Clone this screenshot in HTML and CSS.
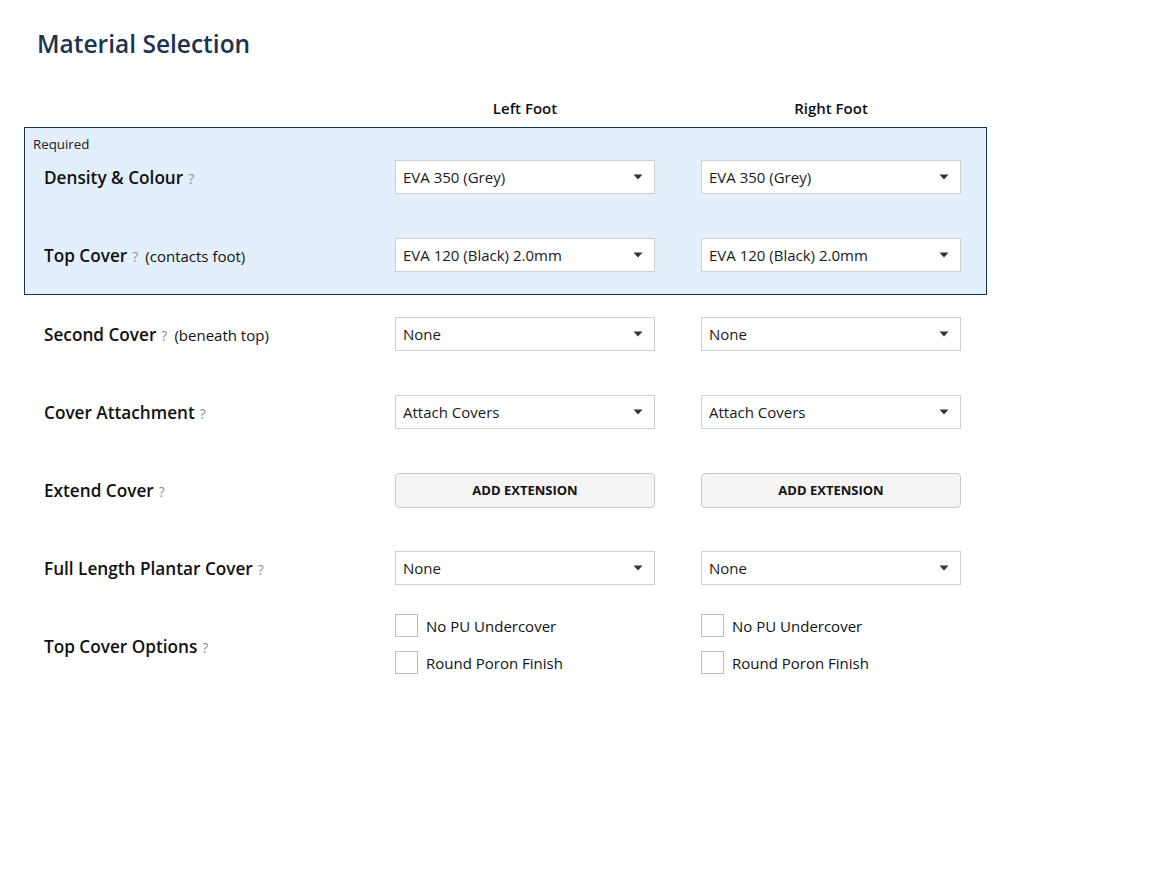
FILE: index.html
```html
<!DOCTYPE html>
<html>
<head>
<meta charset="utf-8">
<link rel="stylesheet" href="styles.css">
</head>
<body>
<div class="page">
  <h1 class="title">Material Selection</h1>
  <div class="form">
    <div class="grid head">
      <div></div>
      <div class="colhead">Left Foot</div>
      <div class="colhead">Right Foot</div>
    </div>
    <div class="required">
      <span class="req-tag">Required</span>
      <div class="grid row">
        <div class="label"><b>Density &amp; Colour</b><span class="q">?</span></div>
        <div class="select"><span>EVA 350 (Grey)</span><svg class="arrow" width="10" height="6" viewBox="0 0 10 6"><path d="M0.5 0.5h9L5 5.5z" fill="#333"/></svg></div>
        <div class="select"><span>EVA 350 (Grey)</span><svg class="arrow" width="10" height="6" viewBox="0 0 10 6"><path d="M0.5 0.5h9L5 5.5z" fill="#333"/></svg></div>
      </div>
      <div class="grid row">
        <div class="label"><b>Top Cover</b><span class="q">?</span><span class="note">(contacts foot)</span></div>
        <div class="select"><span>EVA 120 (Black) 2.0mm</span><svg class="arrow" width="10" height="6" viewBox="0 0 10 6"><path d="M0.5 0.5h9L5 5.5z" fill="#333"/></svg></div>
        <div class="select"><span>EVA 120 (Black) 2.0mm</span><svg class="arrow" width="10" height="6" viewBox="0 0 10 6"><path d="M0.5 0.5h9L5 5.5z" fill="#333"/></svg></div>
      </div>
    </div>
    <div class="rest">
      <div class="grid row">
        <div class="label"><b>Second Cover</b><span class="q">?</span><span class="note">(beneath top)</span></div>
        <div class="select"><span>None</span><svg class="arrow" width="10" height="6" viewBox="0 0 10 6"><path d="M0.5 0.5h9L5 5.5z" fill="#333"/></svg></div>
        <div class="select"><span>None</span><svg class="arrow" width="10" height="6" viewBox="0 0 10 6"><path d="M0.5 0.5h9L5 5.5z" fill="#333"/></svg></div>
      </div>
      <div class="grid row">
        <div class="label"><b>Cover Attachment</b><span class="q">?</span></div>
        <div class="select"><span>Attach Covers</span><svg class="arrow" width="10" height="6" viewBox="0 0 10 6"><path d="M0.5 0.5h9L5 5.5z" fill="#333"/></svg></div>
        <div class="select"><span>Attach Covers</span><svg class="arrow" width="10" height="6" viewBox="0 0 10 6"><path d="M0.5 0.5h9L5 5.5z" fill="#333"/></svg></div>
      </div>
      <div class="grid row">
        <div class="label"><b>Extend Cover</b><span class="q">?</span></div>
        <button class="btn">ADD EXTENSION</button>
        <button class="btn">ADD EXTENSION</button>
      </div>
      <div class="grid row">
        <div class="label"><b>Full Length Plantar Cover</b><span class="q">?</span></div>
        <div class="select"><span>None</span><svg class="arrow" width="10" height="6" viewBox="0 0 10 6"><path d="M0.5 0.5h9L5 5.5z" fill="#333"/></svg></div>
        <div class="select"><span>None</span><svg class="arrow" width="10" height="6" viewBox="0 0 10 6"><path d="M0.5 0.5h9L5 5.5z" fill="#333"/></svg></div>
      </div>
      <div class="grid row">
        <div class="label"><b>Top Cover Options</b><span class="q">?</span></div>
        <div class="checks">
          <label class="check"><span class="box"></span>No PU Undercover</label>
          <label class="check"><span class="box"></span>Round Poron Finish</label>
        </div>
        <div class="checks">
          <label class="check"><span class="box"></span>No PU Undercover</label>
          <label class="check"><span class="box"></span>Round Poron Finish</label>
        </div>
      </div>
    </div>
  </div>
</div>
</body>
</html>
```

FILE: styles.css
```css
* { box-sizing: border-box; }
html, body { margin: 0; padding: 0; background: #fff; }
body {
  font-family: "Open Sans", "Noto Sans", "Liberation Sans", sans-serif;
  color: #111;
}
.page {
  padding: 26px 0 0 24px;
}
.title {
  margin: 0 0 0 13px;
  font-size: 24.5px;
  line-height: 36px;
  font-weight: 600;
  color: #1c3350;
}
.form {
  width: 963px;
  margin-top: 36px;
}
.grid {
  display: grid;
  grid-template-columns: 305px 260px 260px;
  column-gap: 46px;
  padding-left: 20px;
}
.head {
  height: 20px;
  align-items: center;
  margin-bottom: 9px;
}
.colhead {
  text-align: center;
  font-size: 15px;
  font-weight: 600;
}
.required {
  position: relative;
  background: #e3f0fb;
  border: 1px solid #1c3350;
  padding-top: 10px;
}
.required .grid { padding-left: 19px; }
.req-tag {
  position: absolute;
  left: 8px;
  top: 8px;
  font-size: 13.3px;
  line-height: 16px;
  color: #222;
}
.rest .grid { padding-left: 20px; }
.row {
  height: 78px;
  align-items: center;
}
.label {
  display: flex;
  align-items: baseline;
  font-size: 17.2px;
  white-space: nowrap;
}
.label b {
  font-weight: 600;
}
.q {
  font-size: 14px;
  color: #8b9096;
  margin-left: 5px;
}
.note {
  font-size: 15px;
  margin-left: 7px;
}
.select {
  height: 34px;
  background: #fff;
  border: 1px solid #cfcfcf;
  display: flex;
  align-items: center;
  justify-content: space-between;
  padding: 0 11px 0 7px;
  font-size: 15px;
  color: #1a1a1a;
}
.arrow { display: block; }
.btn {
  height: 35px;
  background: #f5f5f5;
  border: 1px solid #c9c9c9;
  border-radius: 4px;
  font-family: inherit;
  font-size: 13px;
  font-weight: 700;
  color: #111;
  padding: 0;
}
.checks {
  display: flex;
  flex-direction: column;
  gap: 15px;
  margin-top: -4px;
}
.check {
  display: flex;
  align-items: center;
  font-size: 15px;
  height: 22px;
}
.box {
  width: 23px;
  height: 23px;
  border: 1px solid #bdbdbd;
  background: #fff;
  margin-right: 8px;
  flex: none;
}
```
